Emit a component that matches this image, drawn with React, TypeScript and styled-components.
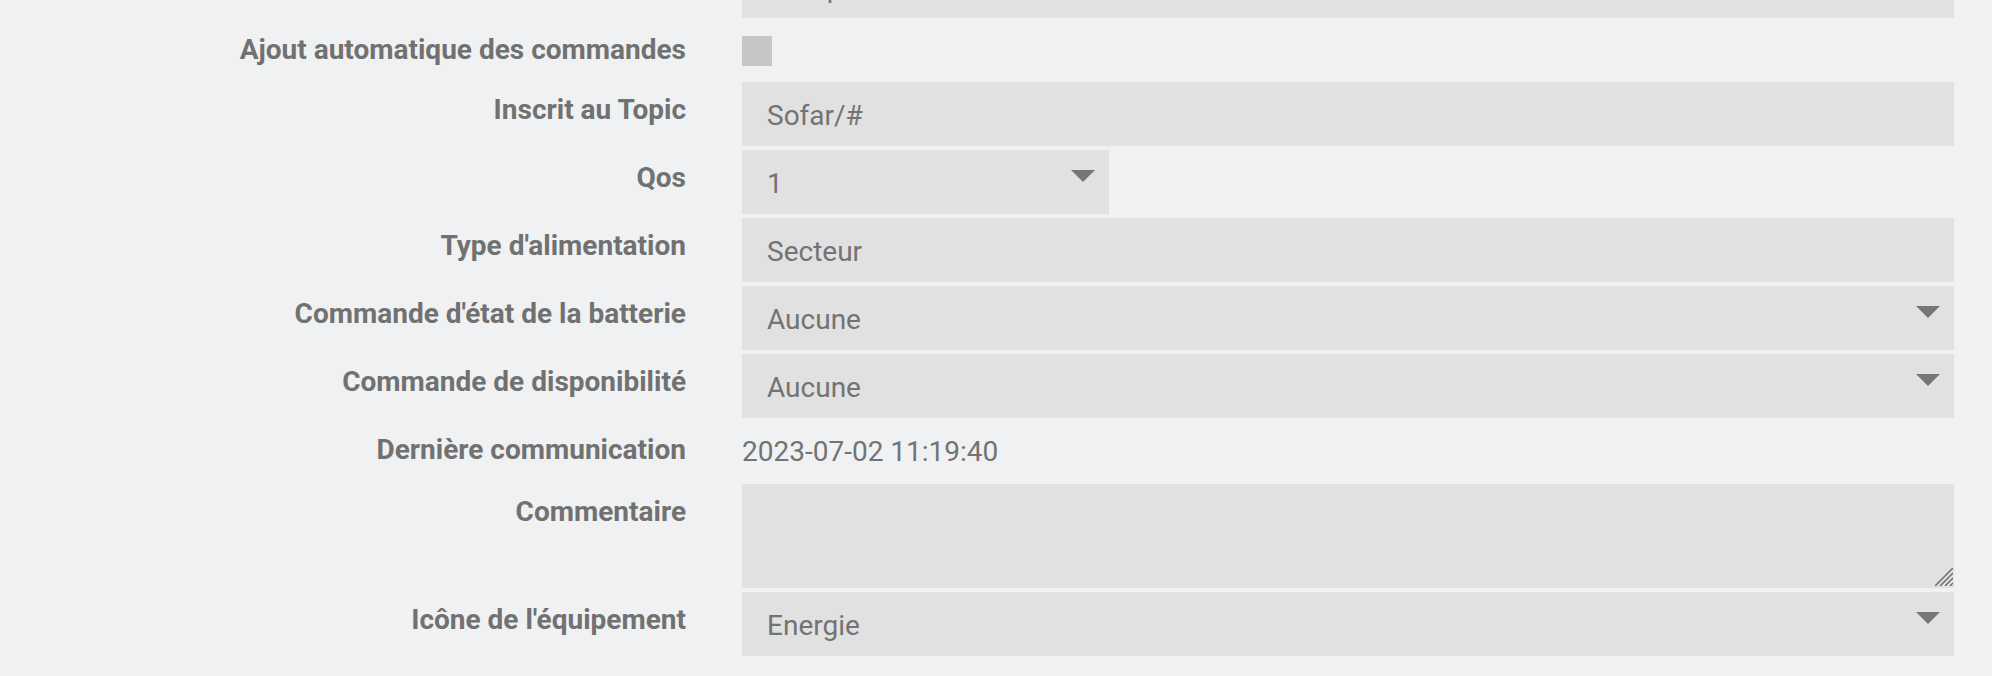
import styled, { createGlobalStyle } from "styled-components";

const GlobalStyle = createGlobalStyle`
  html, body {
    margin: 0;
    padding: 0;
    background: #f0f1f3;
    overflow: hidden;
  }
  body {
    font-family: Roboto, "Liberation Sans", sans-serif;
  }
`;

const Form = styled.form`
  display: flex;
  flex-direction: column;
  gap: 4px;
  padding-right: 38px;
  margin-top: -46px;
`;

const Row = styled.div<{ $height?: number }>`
  display: grid;
  grid-template-columns: 686px 1fr;
  column-gap: 56px;
  align-items: start;
  min-height: ${({ $height }) => ($height ? `${$height}px` : "auto")};
`;

const Label = styled.label`
  text-align: right;
  font-size: 28px;
  font-weight: 700;
  line-height: 38px;
  padding-top: 9px;
  color: #717171;
`;

const fieldBase = `
  box-sizing: border-box;
  width: 100%;
  border: none;
  outline: none;
  background: #e0e1e0;
  color: #737373;
  font-family: Roboto, "Liberation Sans", sans-serif;
  font-size: 28px;
  padding: 3px 25px 0;
`;

const Input = styled.input`
  ${fieldBase}
  height: 64px;
`;

const SelectWrap = styled.div<{ $width?: number }>`
  position: relative;
  width: ${({ $width }) => ($width ? `${$width}px` : "100%")};

  &::after {
    content: "";
    position: absolute;
    top: 20px;
    right: 14px;
    border-left: 12px solid transparent;
    border-right: 12px solid transparent;
    border-top: 12px solid #767676;
    pointer-events: none;
  }
`;

const Select = styled.select`
  ${fieldBase}
  height: 64px;
  appearance: none;
  -webkit-appearance: none;
`;

const TextAreaWrap = styled.div`
  position: relative;
`;

const TextArea = styled.textarea`
  ${fieldBase}
  display: block;
  height: 104px;
  padding: 12px 25px;
  resize: none;
`;

const Grip = styled.svg`
  position: absolute;
  right: 1px;
  bottom: 2px;
  width: 18px;
  height: 18px;
  pointer-events: none;
`;

const Checkbox = styled.span`
  display: block;
  width: 30px;
  height: 30px;
  margin-top: 14px;
  background: #c6c6c6;
`;

const StaticValue = styled.span`
  font-size: 28px;
  line-height: 56px;
  padding-top: 2px;
  color: #737373;
`;

const App = () => {
  return (
    <>
      <GlobalStyle />
      <Form>
        <Row>
          <Label />
          <Input defaultValue="Groupe" />
        </Row>
        <Row $height={56}>
          <Label>Ajout automatique des commandes</Label>
          <Checkbox />
        </Row>
        <Row>
          <Label>Inscrit au Topic</Label>
          <Input defaultValue="Sofar/#" />
        </Row>
        <Row>
          <Label>Qos</Label>
          <SelectWrap $width={367}>
            <Select defaultValue="1">
              <option value="0">0</option>
              <option value="1">1</option>
              <option value="2">2</option>
            </Select>
          </SelectWrap>
        </Row>
        <Row>
          <Label>Type d'alimentation</Label>
          <Input defaultValue="Secteur" />
        </Row>
        <Row>
          <Label>Commande d'état de la batterie</Label>
          <SelectWrap>
            <Select defaultValue="none">
              <option value="none">Aucune</option>
            </Select>
          </SelectWrap>
        </Row>
        <Row>
          <Label>Commande de disponibilité</Label>
          <SelectWrap>
            <Select defaultValue="none">
              <option value="none">Aucune</option>
            </Select>
          </SelectWrap>
        </Row>
        <Row $height={56}>
          <Label>Dernière communication</Label>
          <StaticValue>2023-07-02 11:19:40</StaticValue>
        </Row>
        <Row>
          <Label>Commentaire</Label>
          <TextAreaWrap>
            <TextArea />
            <Grip viewBox="0 0 18 18">
              <g stroke="#6a6a6a" strokeWidth="1.5">
                <line x1="0" y1="18" x2="18" y2="0" />
                <line x1="5" y1="18" x2="18" y2="5" />
                <line x1="10" y1="18" x2="18" y2="10" />
                <line x1="15" y1="18" x2="18" y2="15" />
              </g>
            </Grip>
          </TextAreaWrap>
        </Row>
        <Row>
          <Label>Icône de l'équipement</Label>
          <SelectWrap>
            <Select defaultValue="energy">
              <option value="energy">Energie</option>
            </Select>
          </SelectWrap>
        </Row>
      </Form>
    </>
  );
};

export default App;
